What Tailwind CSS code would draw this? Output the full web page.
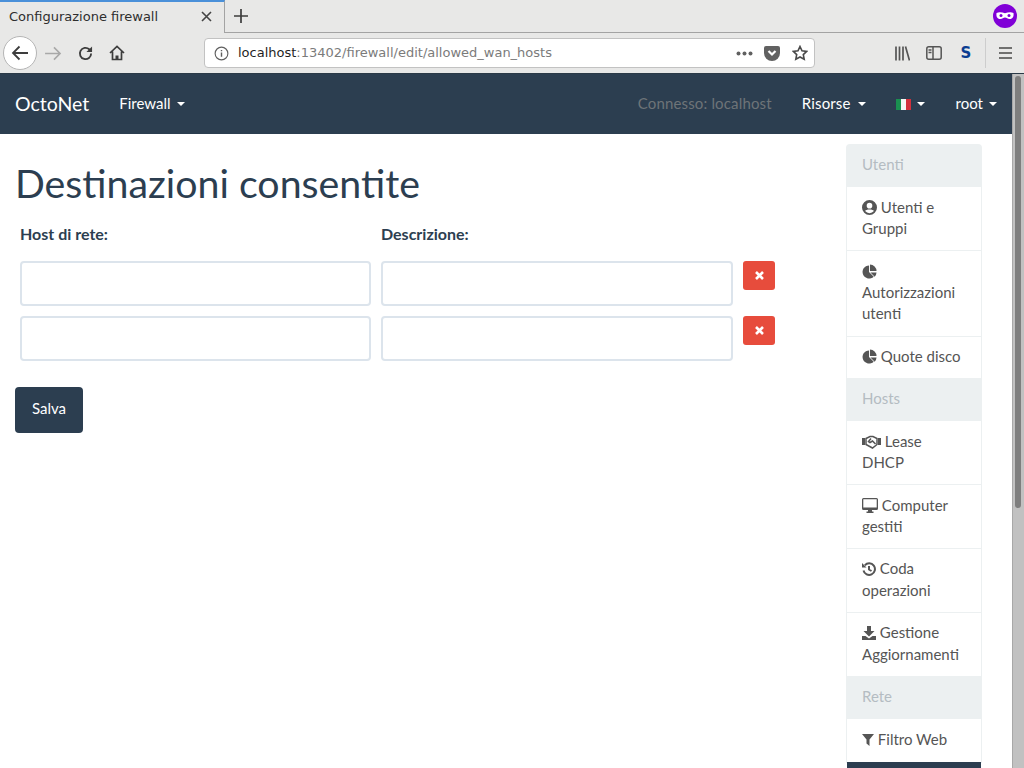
<!DOCTYPE html>
<html lang="it"><head><meta charset="utf-8"><title>Configurazione firewall</title>
<script src="https://cdn.jsdelivr.net/npm/@tailwindcss/browser@4"></script></head>
<body class="w-[1024px] h-[768px] overflow-hidden bg-white font-['Lato',sans-serif] text-[15px] leading-[21.43px] text-[#2c3e50]">

<!-- browser chrome -->
<div class="h-[74px] bg-[#e8e8e7] border-b border-[#2b3a47] font-['DejaVu_Sans',sans-serif] flex flex-col">
  <div class="h-[33px] flex shrink-0">
    <div class="w-[225px] h-[33px] border-t-2 border-t-[#4a90d9] border-r border-r-[#a3a3a3] flex items-center pl-[9px] pr-[12px] pb-[2px] text-[13px] text-[#2e2e2e]">
      <span class="flex-1 whitespace-nowrap">Configurazione firewall</span>
      <svg class="w-[11px] h-[11px]" viewBox="0 0 11 11" fill="none" stroke="#444" stroke-width="1.6"><path d="M1 1l9 9M10 1l-9 9"/></svg>
    </div>
    <div class="flex-1 border-b border-[#a3a3a3] flex items-center pl-[9px] pr-[7px] justify-between">
      <svg class="w-[14px] h-[14px]" viewBox="0 0 14 14" fill="none" stroke="#3c3c3c" stroke-width="1.7"><path d="M7 0v14M0 7h14"/></svg>
      <svg class="w-[24px] h-[24px]" viewBox="0 0 24 24"><circle cx="12" cy="12" r="12" fill="#8000d7"/><path d="M3.500 9c2.800-1.200 5.800-0.500 8.500 0.300 2.700-0.800 5.700-1.500 8.500-0.300 0.500 3.500 -0.700 6-3.800 6-2.200 0-3-1.500-4.700-1.500s-2.500 1.500-4.700 1.500c-3.100 0-4.300-2.500-3.800-6z" fill="#fff"/><circle cx="8" cy="11.500" r="1.500" fill="#8000d7"/><circle cx="16" cy="11.500" r="1.500" fill="#8000d7"/></svg>
    </div>
  </div>
  <div class="flex-1 flex items-center relative">
    <div class="ml-[3px] w-[34px] h-[34px] rounded-full bg-white border border-[#b5b5b5] flex items-center justify-center">
      <svg class="w-[18px] h-[16px]" viewBox="0 0 18 16" fill="none" stroke="#3d3d3d" stroke-width="1.8"><path d="M17 8H2M8.500 1.500L2 8l6.500 6.500"/></svg>
    </div>
    <svg class="ml-[8px] w-[17px] h-[15px]" viewBox="0 0 18 16" fill="none" stroke="#a8a8a8" stroke-width="1.7"><path d="M0 8h16M9.500 1.500L16 8l-6.500 6.500"/></svg>
    <svg class="ml-[16px] w-[15px] h-[15px]" viewBox="0 0 16 16" fill="none" stroke="#3d3d3d" stroke-width="2"><path d="M14 8a6 6 0 1 1-2-4.500L14 5"/><path d="M15 0.500V6.500H9" fill="#3d3d3d" stroke="none"/></svg>
    <svg class="ml-[16px] w-[16px] h-[16px]" viewBox="0 0 16 16" fill="none" stroke="#3d3d3d" stroke-width="1.700"><path d="M1 8l7-6.500L15 8M3.500 6.500V14.500H12.500V6.500"/><path d="M6.500 14.500v-4h3v4" fill="#3d3d3d" stroke="none"/></svg>
    <div class="ml-[79px] w-[611px] h-[30px] bg-white border border-[#c2c2c2] rounded-[4px] flex items-center pl-[9px] pr-[6px] text-[13px] whitespace-nowrap">
      <svg class="w-[15px] h-[15px] shrink-0" viewBox="0 0 16 16" fill="none" stroke="#5f5f5f" stroke-width="1.200"><circle cx="8" cy="8" r="6.800"/><path d="M8 7v4.500M8 4.200v1.500" stroke-width="1.500"/></svg>
      <span class="ml-[9px] text-[#1f1f1f]">localhost</span><span class="text-[#7b7b7b]">:13402/firewall/edit/allowed_wan_hosts</span>
      <span class="flex-1"></span>
      <svg class="w-[17px] h-[5px]" viewBox="0 0 17 5" fill="#606060"><circle cx="2.500" cy="2.500" r="2"/><circle cx="8.500" cy="2.500" r="2"/><circle cx="14.500" cy="2.500" r="2"/></svg>
      <svg class="ml-[11px] w-[16px] h-[15px]" viewBox="0 0 16 15"><path d="M2 0h12a2 2 0 0 1 2 2v5a8 8 0 0 1-16 0V2a2 2 0 0 1 2-2z" fill="#616161"/><path d="M4.500 5l3.500 3.500L11.500 5" fill="none" stroke="#fff" stroke-width="2.200"/></svg>
      <svg class="ml-[12px] w-[16px] h-[16px]" viewBox="0 0 16 16" fill="none" stroke="#4a4a4a" stroke-width="1.600"><path d="M8 1.500l2 4.300 4.700.6-3.400 3.200.9 4.700L8 12l-4.200 2.300.9-4.700L1.300 6.400l4.700-.6z"/></svg>
    </div>
    <svg class="ml-[80px] w-[15px] h-[15px]" viewBox="0 0 15 15" fill="none" stroke="#555" stroke-width="1.700"><path d="M1 0.500v14M4.500 0.500v14M8 0.500v14M10.500 0.500l4 14"/></svg>
    <svg class="ml-[16px] w-[16px] h-[14px]" viewBox="0 0 16 14" fill="none" stroke="#555" stroke-width="1.500"><rect x="0.800" y="0.800" width="14.400" height="12.400" rx="2"/><path d="M7 1v12M2.500 4h3M2.500 6.500h3"/></svg>
    <span class="ml-[17px] w-[14px] text-center text-[15px] font-bold leading-none text-[#0b3d91]">S</span>
    <div class="ml-[12px] w-px h-[30px] bg-[#cdcdcd]"></div>
    <svg class="ml-[13px] w-[13px] h-[12px]" viewBox="0 0 13 12" fill="none" stroke="#484848" stroke-width="1.600"><path d="M0 1h13M0 6h13M0 11h13"/></svg>
  </div>
</div>

<div class="flex h-[694px]">
  <div class="w-[1012px] shrink-0 overflow-hidden">
    <nav class="h-[60px] bg-[#2c3e50] flex items-center text-white pl-[15px]">
      <span class="text-[19.5px]">OctoNet</span>
      <span class="ml-[30px]">Firewall</span><span class="ml-[6px] w-0 h-0 border-x-4 border-x-transparent border-t-4 border-t-white"></span>
      <span class="ml-auto text-[#6e7478] tracking-[0.16px]">Connesso: localhost</span>
      <span class="ml-[30px] tracking-[0.15px]">Risorse</span><span class="ml-[7px] w-0 h-0 border-x-4 border-x-transparent border-t-4 border-t-white"></span>
      <span class="ml-[30px] w-[15px] h-[11px] flex"><i class="flex-1 bg-[#1a9050]"></i><i class="flex-1 bg-[#f5f5f5]"></i><i class="flex-1 bg-[#d2303c]"></i></span><span class="ml-[6px] w-0 h-0 border-x-4 border-x-transparent border-t-4 border-t-white"></span>
      <span class="ml-[31px]">root</span><span class="ml-[6px] w-0 h-0 border-x-4 border-x-transparent border-t-4 border-t-white"></span>
      <span class="w-[15px]"></span>
    </nav>
    <div class="flex">
      <main class="w-[846px] shrink-0 pl-[15px]">
        <h1 class="mt-[27px] text-[39.3px] leading-[43px]">Destinazioni consentite</h1>
        <div class="mt-[19px] pl-[5px] grid grid-cols-[351px_352px_32px] gap-x-[10px] gap-y-[10px] items-start">
          <label class="font-bold text-[16px] h-[28px]">Host di rete:</label>
          <label class="font-bold text-[16px] h-[28px]">Descrizione:</label>
          <span></span>
          <input class="h-[45px] border-2 border-[#dce4ec] rounded-[4px] bg-white" type="text" aria-label="Host di rete">
          <input class="h-[45px] border-2 border-[#dce4ec] rounded-[4px] bg-white" type="text" aria-label="Descrizione">
          <button class="h-[29px] rounded-[3px] bg-[#e74c3c] flex items-center justify-center"><svg class="w-[9px] h-[9px]" viewBox="0 0 9 9" fill="none" stroke="#fff" stroke-width="2.600"><path d="M1 1l7 7M8 1l-7 7"/></svg></button>
          <input class="h-[45px] border-2 border-[#dce4ec] rounded-[4px] bg-white" type="text" aria-label="Host di rete">
          <input class="h-[45px] border-2 border-[#dce4ec] rounded-[4px] bg-white" type="text" aria-label="Descrizione">
          <button class="h-[29px] rounded-[3px] bg-[#e74c3c] flex items-center justify-center"><svg class="w-[9px] h-[9px]" viewBox="0 0 9 9" fill="none" stroke="#fff" stroke-width="2.600"><path d="M1 1l7 7M8 1l-7 7"/></svg></button>
        </div>
        <button class="mt-[26px] w-[68px] h-[46px] pb-[2px] rounded-[4px] bg-[#2c3e50] text-white">Salva</button>
      </main>
      <aside class="mt-[10px] w-[136px] shrink-0 text-[#555]">
        <div class="rounded-t-[4px] bg-[#ecf0f1] text-[#b4bcc2] px-[16px] py-[10px] h-[43px] -mb-px">Utenti</div>
        <div class="border border-[#ecf0f1] px-[15px] py-[10px] h-[65px] -mb-px"><svg class="inline w-[15px] h-[15px] align-[-2px]" viewBox="0 0 16 16"><path fill="#555" fill-rule="evenodd" d="M8 0a8 8 0 1 0 0 16A8 8 0 0 0 8 0zm0 3a3 3 0 1 1 0 6 3 3 0 0 1 0-6zm0 11a6 6 0 0 1-4.700-2.300C4 10.500 5.500 10 8 10s4 .5 4.700 1.700A6 6 0 0 1 8 14z"/></svg> Utenti e Gruppi</div>
        <div class="border border-[#ecf0f1] px-[15px] py-[10px] h-[87px] -mb-px leading-[21px]"><svg class="inline w-[15px] h-[15px] align-[-2px]" viewBox="0 0 16 16"><path fill="#555" d="M7.500 1.500a7 7 0 1 0 5 12l-5-5zM8.500 .5V7.500H15.500A7 7 0 0 0 8.500 .5zM9 9l4.500 4.500A7 7 0 0 0 15.500 9z"/></svg> Autorizzazioni utenti</div>
        <div class="border border-[#ecf0f1] px-[15px] pt-[9px] h-[43px] -mb-px whitespace-nowrap"><svg class="inline w-[15px] h-[15px] align-[-2px]" viewBox="0 0 16 16"><path fill="#555" d="M7.500 1.500a7 7 0 1 0 5 12l-5-5zM8.500 .5V7.500H15.500A7 7 0 0 0 8.500 .5zM9 9l4.500 4.500A7 7 0 0 0 15.500 9z"/></svg> Quote disco</div>
        <div class="bg-[#ecf0f1] text-[#b4bcc2] px-[16px] py-[10px] h-[43px] -mb-px">Hosts</div>
        <div class="border border-[#ecf0f1] px-[15px] py-[10px] h-[65px] -mb-px"><svg class="inline w-[19px] h-[14px] align-[-2px]" viewBox="0 0 19 14"><path fill="none" stroke="#555" stroke-width="1.500" d="M4 3.500L8 1.500h3l4 2v6l-4.500 3.500L4 9.500zM9 3.500L6.500 6.500 8 7.500l2.500-1.500 3 3"/><path fill="#555" d="M0 3h3v7H0zM16 3h3v7h-3z"/></svg> Lease DHCP</div>
        <div class="border border-[#ecf0f1] px-[15px] py-[10px] h-[65px] -mb-px"><svg class="inline w-[16px] h-[15px] align-[-2px]" viewBox="0 0 16 15"><path fill="#555" fill-rule="evenodd" d="M1.500 0h13A1.500 1.500 0 0 1 16 1.500v9a1.500 1.500 0 0 1-1.500 1.500H10v1.500h1.500V15h-7v-1.500H6V12H1.500A1.500 1.500 0 0 1 0 10.500v-9A1.500 1.500 0 0 1 1.500 0zM1.300 1.300v8.200h13.400V1.300z"/></svg> Computer gestiti</div>
        <div class="border border-[#ecf0f1] px-[15px] pt-[8px] h-[65px] -mb-px leading-[22px]"><svg class="inline w-[14px] h-[14px] align-[-2px]" viewBox="0 0 14 14"><path fill="none" stroke="#555" stroke-width="2" d="M2.800 3.300A5.800 5.800 0 1 1 1.500 8.500M7 4v3.500l2.500 1.500"/><path fill="#555" d="M0 1l4.500 4.500H0z"/></svg> Coda operazioni</div>
        <div class="border border-[#ecf0f1] px-[15px] pt-[8px] h-[65px] -mb-px leading-[22px]"><svg class="inline w-[14px] h-[14px] align-[-2px]" viewBox="0 0 14 14"><path fill="#555" d="M5 0h4v5h3.500L7 10.500 1.500 5H5zM0 10h3.500L7 12.500 10.500 10H14v4H0z"/></svg> Gestione Aggiornamenti</div>
        <div class="bg-[#ecf0f1] text-[#b4bcc2] px-[16px] py-[10px] h-[43px] -mb-px">Rete</div>
        <div class="border border-[#ecf0f1] px-[15px] py-[10px] h-[45px] -mb-px whitespace-nowrap"><svg class="inline w-[12px] h-[12px] align-[-1px]" viewBox="0 0 12 12"><path fill="#555" d="M0 0h12L7.500 5.500V12L4.500 9.500V5.500z"/></svg> Filtro Web</div>
        <div class="bg-[#2c3e50] mx-px h-[60px]"></div>
      </aside>
    </div>
  </div>
  <div class="w-[12px] h-full bg-[#c1c1c1] border-l border-[#a8a8a8] pl-[2px] pt-[2px]">
    <div class="w-[6px] h-[432px] rounded-full bg-[#7e7e7e]"></div>
  </div>
</div>
</body></html>
